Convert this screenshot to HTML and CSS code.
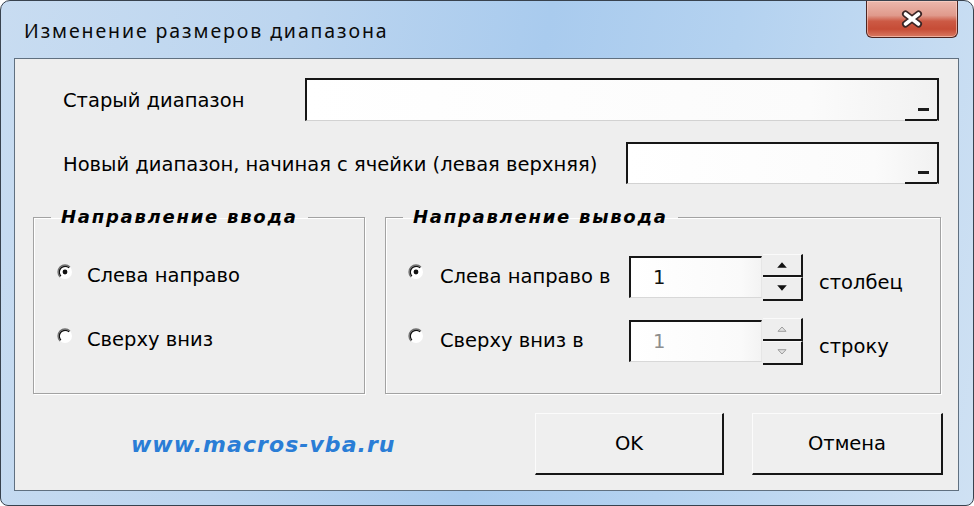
FILE: index.html
```html
<!DOCTYPE html>
<html lang="ru">
<head>
<meta charset="utf-8">
<title>Изменение размеров диапазона</title>
<link rel="stylesheet" href="styles.css">
</head>
<body>
<div class="window">
  <div class="titlebar">
    <span class="title">Изменение размеров диапазона</span>
    <button class="close" aria-label="Закрыть">
      <svg width="26" height="20" viewBox="0 0 26 20">
        <path d="M6.5 5 L19.5 15 M19.5 5 L6.5 15" stroke="#3a2626" stroke-width="7" stroke-linecap="round" fill="none"/>
        <path d="M6.5 5 L19.5 15 M19.5 5 L6.5 15" stroke="#ffffff" stroke-width="3.6" stroke-linecap="round" fill="none"/>
      </svg>
    </button>
  </div>
  <div class="client">
    <div class="field field-old">
      <span class="label">Старый диапазон</span>
      <div class="refedit refedit-old">
        <span class="refbtn"><span class="dash"></span></span>
      </div>
    </div>
    <div class="field field-new">
      <span class="label">Новый диапазон, начиная с ячейки (левая верхняя)</span>
      <div class="refedit refedit-new">
        <span class="refbtn"><span class="dash"></span></span>
      </div>
    </div>

    <div class="groups">
      <fieldset class="group group-in">
        <legend>Направление ввода</legend>
        <div class="opts">
          <div class="opt">
            <svg class="radio" width="18" height="18" viewBox="0 0 18 18">
              <circle cx="9" cy="9" r="7" fill="#ffffff"/>
              <path d="M4.05 13.95 A7 7 0 0 1 13.95 4.05" fill="none" stroke="#707070" stroke-width="1.3"/>
              <path d="M4.9 13.1 A5.8 5.8 0 0 1 13.1 4.9" fill="none" stroke="#111" stroke-width="1.3"/>
              <circle cx="9" cy="9" r="2.4" fill="#111"/>
            </svg>
            <span class="optlabel">Слева направо</span>
          </div>
          <div class="opt">
            <svg class="radio" width="18" height="18" viewBox="0 0 18 18">
              <circle cx="9" cy="9" r="7" fill="#ffffff"/>
              <path d="M4.05 13.95 A7 7 0 0 1 13.95 4.05" fill="none" stroke="#707070" stroke-width="1.3"/>
              <path d="M4.9 13.1 A5.8 5.8 0 0 1 13.1 4.9" fill="none" stroke="#111" stroke-width="1.3"/>
            </svg>
            <span class="optlabel">Сверху вниз</span>
          </div>
        </div>
      </fieldset>

      <fieldset class="group group-out">
        <legend>Направление вывода</legend>
        <div class="opts2">
          <div class="opt2">
            <svg class="radio" width="18" height="18" viewBox="0 0 18 18">
              <circle cx="9" cy="9" r="7" fill="#ffffff"/>
              <path d="M4.05 13.95 A7 7 0 0 1 13.95 4.05" fill="none" stroke="#707070" stroke-width="1.3"/>
              <path d="M4.9 13.1 A5.8 5.8 0 0 1 13.1 4.9" fill="none" stroke="#111" stroke-width="1.3"/>
              <circle cx="9" cy="9" r="2.4" fill="#111"/>
            </svg>
            <span class="dirlabel">Слева направо в</span>
            <span class="spinbox">1</span>
            <span class="spin">
              <span class="spin-btn">
                <svg width="10" height="6" viewBox="0 0 10 6"><path d="M5 0.3 L9.8 5.7 L0.2 5.7 Z" fill="#111"/></svg>
              </span>
              <span class="spin-btn">
                <svg width="10" height="6" viewBox="0 0 10 6"><path d="M0.2 0.3 L9.8 0.3 L5 5.7 Z" fill="#111"/></svg>
              </span>
            </span>
            <span class="unit">столбец</span>
          </div>
          <div class="opt2">
            <svg class="radio" width="18" height="18" viewBox="0 0 18 18">
              <circle cx="9" cy="9" r="7" fill="#ffffff"/>
              <path d="M4.05 13.95 A7 7 0 0 1 13.95 4.05" fill="none" stroke="#707070" stroke-width="1.3"/>
              <path d="M4.9 13.1 A5.8 5.8 0 0 1 13.1 4.9" fill="none" stroke="#111" stroke-width="1.3"/>
            </svg>
            <span class="dirlabel">Сверху вниз в</span>
            <span class="spinbox disabled">1</span>
            <span class="spin">
              <span class="spin-btn">
                <svg width="10" height="6" viewBox="0 0 10 6"><path d="M1 5.3 L5 1 L9 5.3 Z" fill="#e2e2e2" stroke="#9c9c9c" stroke-width="1"/></svg>
              </span>
              <span class="spin-btn">
                <svg width="10" height="6" viewBox="0 0 10 6"><path d="M1 0.7 L9 0.7 L5 5 Z" fill="#e2e2e2" stroke="#9c9c9c" stroke-width="1"/></svg>
              </span>
            </span>
            <span class="unit">строку</span>
          </div>
        </div>
      </fieldset>
    </div>

    <div class="footer">
      <span class="link">www.macros-vba.ru</span>
      <button class="btn btn-ok">OK</button>
      <button class="btn btn-cancel">Отмена</button>
    </div>
  </div>
</div>
</body>
</html>
```

FILE: styles.css
```css
html, body {
  margin: 0;
  padding: 0;
  background: #ffffff;
}

.window {
  width: 974px;
  height: 506px;
  box-sizing: border-box;
  border: 1px solid #38424e;
  border-radius: 10px 10px 8px 8px;
  background: linear-gradient(100deg, #c8dcf1 0%, #bcd5ef 28%, #a9cbee 52%, #b4d2f0 70%, #cfe1f3 100%);
  display: flex;
  flex-direction: column;
  overflow: hidden;
  font-family: "DejaVu Sans", sans-serif;
  color: #000;
}

.titlebar {
  height: 57px;
  flex: none;
  display: flex;
  align-items: flex-start;
}

.title {
  font-family: "Noto Sans", sans-serif;
  font-size: 19.5px;
  letter-spacing: 1.9px;
  line-height: 24px;
  padding: 18px 0 0 23px;
  color: #0a0a0a;
}

.close {
  margin: 0 15px 0 auto;
  width: 92px;
  height: 37px;
  padding: 0;
  box-sizing: border-box;
  border: 1px solid #4d2521;
  border-top: none;
  border-radius: 0 0 6px 6px;
  background: linear-gradient(180deg, #ecb8ad 0%, #e09a8c 40%, #cc5a45 56%, #c64c36 78%, #d97a62 100%);
  box-shadow: inset 0 0 0 1px rgba(255, 220, 210, 0.55);
  display: flex;
  align-items: center;
  justify-content: center;
}

.client {
  flex: 1;
  margin: 0 14px 14px 13px;
  border: 1px solid #607080;
  background: #eeeeee;
  display: flex;
  flex-direction: column;
}

.field {
  display: flex;
  justify-content: space-between;
  align-items: center;
  padding: 0 19px 0 48px;
}

.field-old {
  margin-top: 19px;
  height: 43px;
}

.field-new {
  margin-top: 21px;
  height: 42px;
}

.label {
  font-size: 19.5px;
  line-height: 24px;
  padding-top: 3px;
  white-space: nowrap;
}

.refedit {
  box-sizing: border-box;
  height: 100%;
  border: 2px solid #161616;
  border-bottom: 1px solid #d2d2d2;
  background: linear-gradient(90deg, #ffffff 0%, #fbfbfb 80%, #f1f1f1 100%);
  display: flex;
  justify-content: flex-end;
  align-items: flex-end;
}

.refedit-old {
  width: 634px;
}

.refedit-new {
  width: 313px;
}

.refbtn {
  width: 32px;
  height: 22px;
  box-sizing: border-box;
  border-bottom: 2px solid #161616;
  margin-bottom: -1px;
  display: flex;
  justify-content: center;
  align-items: flex-end;
}

.dash {
  width: 11px;
  height: 3px;
  background: #1c1c1c;
  margin: 0 0 8px 4px;
}

.groups {
  display: flex;
  gap: 20px;
  margin-top: 22px;
  padding: 0 17px 0 18px;
}

.group {
  margin: 0;
  padding: 0;
  min-width: 0;
  border: 1px solid #a2a2a2;
  box-shadow: inset 1px 1px 0 #ffffff, 1px 1px 0 #ffffff;
}

.group-in {
  width: 332px;
  box-sizing: border-box;
  flex: none;
}

.group-out {
  flex: 1;
}

.group legend {
  margin-left: 17px;
  padding: 0 10px;
  font-family: "DejaVu Sans", sans-serif;
  font-weight: bold;
  font-style: italic;
  font-size: 18px;
  letter-spacing: 1.75px;
  line-height: 22px;
  color: #000;
}

.opts {
  display: flex;
  flex-direction: column;
  gap: 32px;
  padding: 32px 0 37px 22px;
}

.opt {
  height: 32px;
  display: flex;
  align-items: center;
}

.radio {
  flex: none;
  margin-bottom: 8px;
}

.optlabel {
  margin-left: 13px;
  font-size: 19.5px;
  line-height: 24px;
  white-space: nowrap;
}

.opts2 {
  display: flex;
  flex-direction: column;
  gap: 16px;
  padding: 25px 0 0 21px;
}

.opt2 {
  height: 48px;
  display: flex;
  align-items: center;
}

.opt2 .radio {
  margin-bottom: 10px;
}

.dirlabel {
  width: 189px;
  margin-left: 15px;
  font-size: 19.5px;
  line-height: 24px;
  white-space: nowrap;
}

.spinbox {
  width: 133px;
  height: 42px;
  box-sizing: border-box;
  border-top: 2px solid #161616;
  border-left: 2px solid #161616;
  border-bottom: 1px solid #d8d8d8;
  border-right: 1px solid #e6e6e6;
  background: linear-gradient(90deg, #ffffff 0%, #fafafa 85%, #f3f3f3 100%);
  padding-left: 22px;
  font-size: 19.5px;
  line-height: 39px;
  color: #111;
}

.spinbox.disabled {
  color: #8e8e8e;
}

.spin {
  width: 40px;
  height: 47px;
  margin-left: 1px;
  display: flex;
  flex-direction: column;
}

.spin-btn {
  flex: 1;
  box-sizing: border-box;
  border-top: 1px solid #fafafa;
  border-right: 2px solid #161616;
  border-bottom: 2px solid #161616;
  display: flex;
  align-items: center;
  justify-content: center;
}

.unit {
  margin-left: 16px;
  margin-top: 12px;
  font-size: 19.5px;
  line-height: 24px;
  white-space: nowrap;
}

.footer {
  display: flex;
  align-items: center;
  height: 62px;
  margin-top: 19px;
  padding: 0 15px 0 116px;
}

.link {
  margin-right: auto;
  font-family: "DejaVu Sans", sans-serif;
  font-weight: bold;
  font-style: italic;
  font-size: 22px;
  letter-spacing: 1.05px;
  color: #2a7dd6;
  white-space: nowrap;
}

.btn {
  height: 62px;
  box-sizing: border-box;
  padding: 0;
  background: #efefef;
  border-top: 1px solid #fbfbfb;
  border-left: 1px solid #fbfbfb;
  border-right: 2px solid #161616;
  border-bottom: 2px solid #161616;
  font-family: "DejaVu Sans", sans-serif;
  font-size: 19.5px;
  color: #000;
}

.btn-ok {
  width: 189px;
}

.btn-cancel {
  width: 191px;
  margin-left: 28px;
}
```
